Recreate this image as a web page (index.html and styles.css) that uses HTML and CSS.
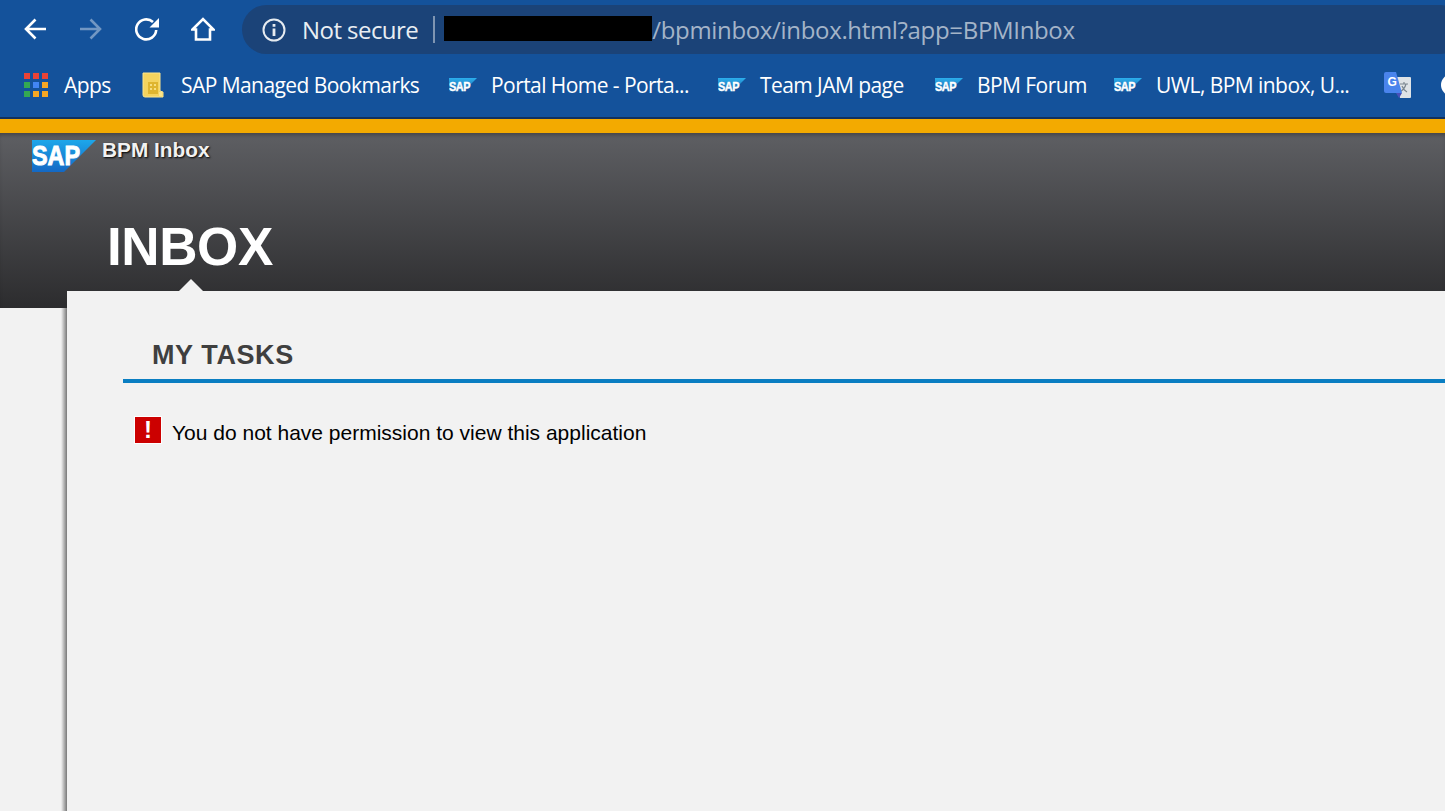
FILE: index.html
```html
<!DOCTYPE html>
<html lang="en">
<head>
<meta charset="utf-8">
<title>BPM Inbox</title>
<link rel="stylesheet" href="styles.css">
</head>
<body>
<svg class="defs" width="0" height="0" aria-hidden="true">
  <defs>
    <linearGradient id="sapg" x1="0" y1="0" x2="0" y2="1">
      <stop offset="0" stop-color="#1da7ea"/>
      <stop offset="1" stop-color="#1468c4"/>
    </linearGradient>
    <linearGradient id="sapm" x1="0" y1="0" x2="0" y2="1">
      <stop offset="0" stop-color="#2cb0ee"/>
      <stop offset="1" stop-color="#14589f"/>
    </linearGradient>
    <symbol id="sap-mini" viewBox="0 0 28 14">
      <path d="M0 0H28L14 14H0Z" fill="url(#sapm)"/>
      <text x="0" y="13" class="mini-text" textLength="21" lengthAdjust="spacingAndGlyphs">SAP</text>
    </symbol>
  </defs>
</svg>
<header class="browser">
  <div class="toolbar">
    <button class="nav"><svg viewBox="0 0 24 24" width="24" height="24"><path d="M23 12H3M12.500 2.500 3 12l9.500 9.500" class="stroke"/></svg></button>
    <button class="nav nav-off"><svg viewBox="0 0 24 24" width="24" height="24"><path d="M1 12h20M11.500 2.500 21 12l-9.500 9.500" class="stroke"/></svg></button>
    <button class="nav"><svg viewBox="0 0 24 24" width="24" height="24"><path d="M21.200 13a10 10 0 1 1-3.200-8" class="stroke"/><path d="M24 1v9.500h-9.500Z" class="fill"/></svg></button>
    <button class="nav"><svg viewBox="0 0 24 24" width="24" height="24"><path d="M1.500 12.500 12 2l10.500 10.500H19v10H5v-10Z" class="stroke"/></svg></button>
    <div class="omnibox">
      <svg class="info" viewBox="0 0 24 24" width="24" height="24"><circle cx="12" cy="12" r="10.500" class="stroke thin"/><path d="M10.600 10.500h2.800V18h-2.800zM10.600 6h2.800v2.800h-2.800z" class="fill"/></svg>
      <span class="secure">Not secure</span>
      <span class="sep"></span>
      <span class="redact"></span>
      <span class="url">/bpminbox/inbox.html?app=BPMInbox</span>
    </div>
  </div>
  <nav class="bookmarks">
    <a class="bm bm-apps">
      <span class="apps-grid">
        <i class="r"></i><i class="r"></i><i class="r"></i>
        <i class="g"></i><i class="b"></i><i class="y"></i>
        <i class="g"></i><i class="y"></i><i class="y"></i>
      </span>
      <span>Apps</span>
    </a>
    <a class="bm bm-folder">
      <svg viewBox="0 0 22 26" width="22" height="26"><path d="M1 1h17v18l3 1v5H3a2 2 0 0 1-2-2Z" fill="#f4d35e" stroke="#fbe58d"/><path d="M6 10h10v12H6z" fill="#dfb52f"/><path d="M8 12h2v2H8zM12 12h2v2h-2zM8 16h2v2H8zM12 16h2v2h-2z" fill="#f7de80"/><path d="M17 20h3v4h-3z" fill="#fbe58d"/></svg>
      <span>SAP Managed Bookmarks</span>
    </a>
    <a class="bm bm-portal"><svg class="mini" width="28" height="14"><use href="#sap-mini"/></svg><span>Portal Home - Porta...</span></a>
    <a class="bm bm-jam"><svg class="mini" width="28" height="14"><use href="#sap-mini"/></svg><span>Team JAM page</span></a>
    <a class="bm bm-forum"><svg class="mini" width="28" height="14"><use href="#sap-mini"/></svg><span>BPM Forum</span></a>
    <a class="bm bm-uwl"><svg class="mini" width="28" height="14"><use href="#sap-mini"/></svg><span>UWL, BPM inbox, U...</span></a>
    <a class="bm bm-translate">
      <svg viewBox="0 0 27 26" width="27" height="26"><path d="M12 5h14a1 1 0 0 1 1 1v19a1 1 0 0 1-1 1H16Z" fill="#dfe3e6"/><path d="M16 12h8M20 10v2M22 12c-1 4-3 6-6 8M18 14c1 3 3 5 5 6" fill="none" stroke="#7c8790" stroke-width="1.200"/><path d="M2 0h10l6 21H2a2 2 0 0 1-2-2V2a2 2 0 0 1 2-2Z" fill="#4a84ec"/><path d="M12 21h6l-3 5Z" fill="#4a50b8"/><text x="3.500" y="14" class="g-text">G</text></svg>
    </a>
    <a class="bm bm-clip"><span class="clip"></span></a>
  </nav>
</header>
<div class="accent"></div>
<section class="app-head">
  <div class="brand">
    <svg class="sap-logo" viewBox="0 0 64 32" width="64" height="32">
      <path d="M0 0H64L32 32H0Z" fill="url(#sapg)"/>
      <text x="0" y="25" class="logo-text" textLength="48" lengthAdjust="spacingAndGlyphs">SAP</text>
    </svg>
    <span class="brand-name">BPM Inbox</span>
  </div>
  <h1 class="page-title">INBOX</h1>
</section>
<main class="panel">
  <h2 class="tasks-title">MY TASKS</h2>
  <div class="message">
    <span class="error-icon">!</span>
    <span>You do not have permission to view this application</span>
  </div>
</main>
</body>
</html>
```
FILE: styles.css
```css
* { box-sizing: border-box; }
html, body { margin: 0; height: 100%; overflow: hidden; }
body { background: #f2f2f2; font-family: "Liberation Sans", Arial, sans-serif; }
.defs { position: absolute; }
.stroke { fill: none; stroke: #fff; stroke-width: 2.600; }
.stroke.thin { stroke: #e6ebf0; stroke-width: 2; }
.fill { fill: #fff; }
.info .fill { fill: #e6ebf0; }

.browser { background: #14529b; height: 117px; font-family: "Open Sans", "Noto Sans", sans-serif; }
.toolbar { height: 54px; padding: 5px 0 0 23px; display: flex; align-items: center; }
.nav { flex: none; width: 24px; height: 24px; margin: -2px 32px 0 0; padding: 0; border: 0; background: none; display: flex; }
.nav:nth-child(4) { margin-right: 27px; }
.nav-off svg { opacity: .4; }
.omnibox { flex: 1; height: 49px; margin-right: -20px; border-radius: 25px; background: #1b4378; display: flex; align-items: center; padding-left: 20px; }
.secure { margin-left: 16px; color: #e9eef3; font-size: 24px; letter-spacing: -.55px; white-space: nowrap; }
.sep { width: 2px; height: 27px; margin: 0 9px 0 15px; background: #7f95b2; }
.redact { width: 208px; height: 25px; margin-top: -2px; background: #000; }
.url { color: #a4b4c8; font-size: 24px; letter-spacing: -.33px; white-space: nowrap; }

.bookmarks { height: 63px; padding: 0 0 1px 24px; display: flex; align-items: center; color: #fff; font-size: 21px; letter-spacing: -.56px; white-space: nowrap; overflow: hidden; }
.bm { display: flex; flex: none; align-items: center; }
.bm-apps { gap: 16px; width: 118px; }
.bm-folder { gap: 17px; width: 307px; }
.bm-portal { gap: 14px; width: 269px; }
.bm-jam { gap: 14px; width: 217px; }
.bm-forum { gap: 14px; width: 179px; }
.bm-uwl { gap: 14px; width: 270px; }
.bm-translate { width: 57px; }
.apps-grid { width: 24px; height: 24px; display: grid; grid-template-columns: repeat(3, 6px); grid-template-rows: repeat(3, 6px); gap: 3px; }
.apps-grid .r { background: #ea4335; }
.apps-grid .g { background: #34a853; }
.apps-grid .b { background: #4285f4; }
.apps-grid .y { background: #f5a623; }
.mini-text { font: 700 12.500px "Liberation Sans", sans-serif; fill: #fff; stroke: #fff; stroke-width: .4px; }
.g-text { font: 700 12px "Liberation Sans", sans-serif; fill: #fff; }
.clip { display: block; width: 22px; height: 22px; border-radius: 50%; background: #fff; }

.accent { height: 16px; background: #f3aa00; border-top: 2px solid #12315c; }

.app-head { height: 175px; padding: 7px 0 0 32px; background: linear-gradient(#5e5f63, #2c2c2e); box-shadow: inset 0 4px 4px -2px rgba(0,0,0,.3); }
.brand { display: flex; align-items: flex-start; height: 71px; }
.sap-logo { flex: none; }
.logo-text { font: 700 27px "Liberation Sans", sans-serif; fill: #fff; stroke: #fff; stroke-width: 1px; }
.brand-name { margin: -1px 0 0 6px; color: #f2f2f2; font-weight: 700; font-size: 20.800px; line-height: 22px; text-shadow: 1px 1px 2px #000; }
.page-title { margin: 0 0 0 75px; color: #fff; font-size: 53px; line-height: 72px; font-weight: 700; letter-spacing: -.4px; }

.panel { position: relative; height: 520px; margin: -17px 0 0 67px; padding: 44px 0 0 56px; background: #f2f2f2; }
.panel::before { content: ""; position: absolute; top: -12px; left: 112px; border: 12px solid transparent; border-top: 0; border-bottom-color: #f2f2f2; }
.panel::after { content: ""; position: absolute; top: 17px; bottom: 0; left: -6px; width: 6px; background: linear-gradient(to right, rgba(0,0,0,0), rgba(0,0,0,.5)); }
.tasks-title { margin: 0; height: 48px; padding: 0 0 0 29px; border-bottom: 4px solid #0a7ec2; color: #3f3f3f; font-size: 27px; line-height: 40px; font-weight: 700; letter-spacing: .6px; }
.message { display: flex; align-items: center; margin: 36px 0 0 11px; color: #000; font-size: 21px; line-height: 28px; gap: 10px; }
.error-icon { flex: none; width: 28px; height: 28px; margin-top: -7px; border: 1px solid #fff; background: #cc0000; color: #fff; font-weight: 700; font-size: 24px; line-height: 26px; text-align: center; }
```
